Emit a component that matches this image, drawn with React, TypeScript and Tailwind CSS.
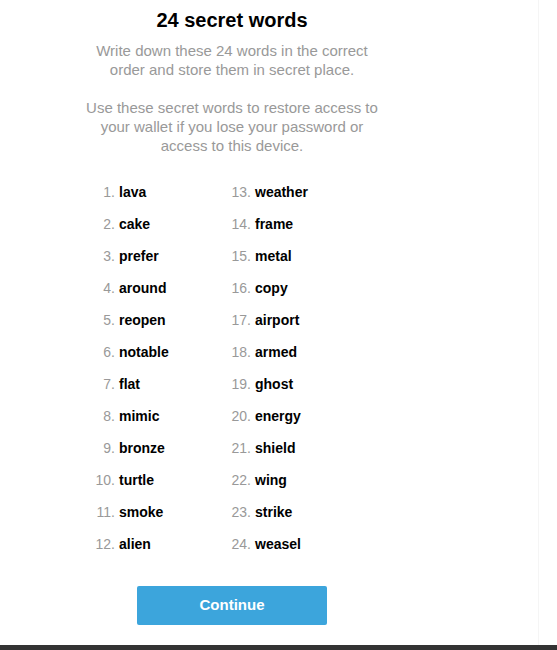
import React from 'react';

const words = [
  'lava', 'cake', 'prefer', 'around', 'reopen', 'notable', 'flat', 'mimic', 'bronze', 'turtle', 'smoke', 'alien',
  'weather', 'frame', 'metal', 'copy', 'airport', 'armed', 'ghost', 'energy', 'shield', 'wing', 'strike', 'weasel',
];

function WordColumn({ start }: { start: number }) {
  return (
    <div className="flex w-[136px] flex-col">
      {words.slice(start, start + 12).map((word, i) => (
        <div key={word} className="flex h-8 items-center text-[14px]">
          <span className="w-[22px] text-right text-[#999]">{start + i + 1}.</span>
          <span className="ml-[4px] font-bold text-black">{word}</span>
        </div>
      ))}
    </div>
  );
}

export default function App() {
  return (
    <div className="flex h-[650px] w-[557px] flex-col bg-white font-['Liberation_Sans',Arial,sans-serif]">
      <div className="flex flex-1 overflow-hidden">
        <div className="flex w-[539px] border-r border-[#f5f5f5]">
          {/* Content */}
          <div className="flex w-[464px] flex-col items-center pt-[8px]">
            <h1 className="text-[20px] font-bold leading-[24px] text-black">24 secret words</h1>
            <p className="mt-[9px] w-[310px] text-center text-[15px] leading-[19px] text-[#999]">
              Write down these 24 words in the correct order and store them in secret place.
              <br />
              <br />
              Use these secret words to restore access to your wallet if you lose your password or access to this device.
            </p>

            {/* Words */}
            <div className="mt-[21px] mr-[6px] flex w-[272px]">
              <WordColumn start={0} />
              <WordColumn start={12} />
            </div>

            <button className="mt-[26px] h-[39px] w-[190px] rounded-[2px] bg-[#3ca5dc] text-[15px] font-bold text-white">
              Continue
            </button>
          </div>
        </div>
      </div>
      <div className="h-[5px] bg-[#333]" />
    </div>
  );
}
